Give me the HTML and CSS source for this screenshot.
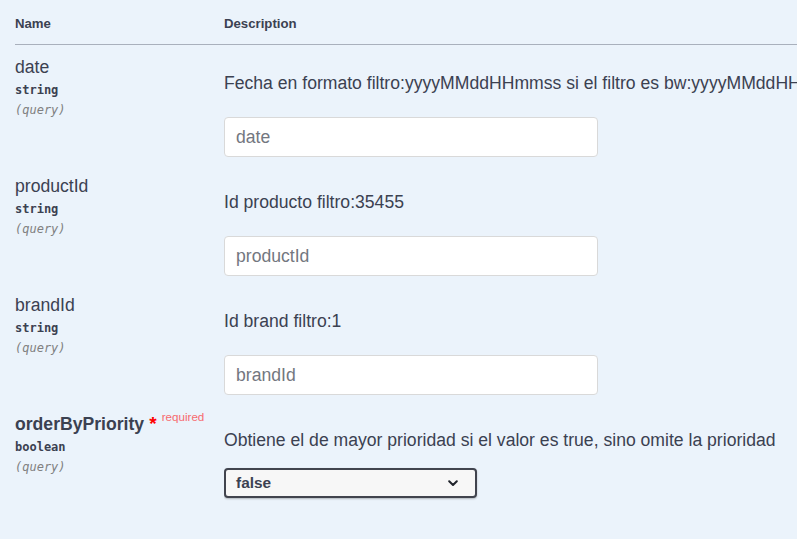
FILE: index.html
```html
<!DOCTYPE html>
<html lang="es">
<head>
<meta charset="utf-8">
<title>Parameters</title>
<link rel="stylesheet" href="styles.css">
</head>
<body>
<div class="params">
  <div class="thead">
    <div class="th">Name</div>
    <div class="th">Description</div>
  </div>

  <div class="row">
    <div class="col-name">
      <div class="p-name">date</div>
      <div class="p-type">string</div>
      <div class="p-in">(query)</div>
    </div>
    <div class="col-desc">
      <p class="desc">Fecha en formato filtro:yyyyMMddHHmmss si el filtro es bw:yyyyMMddHH</p>
      <input class="text-input" type="text" placeholder="date">
    </div>
  </div>

  <div class="row">
    <div class="col-name">
      <div class="p-name">productId</div>
      <div class="p-type">string</div>
      <div class="p-in">(query)</div>
    </div>
    <div class="col-desc">
      <p class="desc">Id producto filtro:35455</p>
      <input class="text-input" type="text" placeholder="productId">
    </div>
  </div>

  <div class="row">
    <div class="col-name">
      <div class="p-name">brandId</div>
      <div class="p-type">string</div>
      <div class="p-in">(query)</div>
    </div>
    <div class="col-desc">
      <p class="desc">Id brand filtro:1</p>
      <input class="text-input" type="text" placeholder="brandId">
    </div>
  </div>

  <div class="row">
    <div class="col-name">
      <div class="p-name required">orderByPriority<span class="star">&nbsp;*</span><span class="req">required</span></div>
      <div class="p-type">boolean</div>
      <div class="p-in">(query)</div>
    </div>
    <div class="col-desc">
      <p class="desc">Obtiene el de mayor prioridad si el valor es true, sino omite la prioridad</p>
      <div class="select">
        <span class="select-value">false</span>
        <svg class="chev" width="10" height="7" viewBox="0 0 10 7"><polyline points="1.2,1.2 5,5 8.8,1.2" fill="none" stroke="#1f232b" stroke-width="2" stroke-linecap="round" stroke-linejoin="round"/></svg>
      </div>
    </div>
  </div>
</div>
</body>
</html>
```

FILE: styles.css
```css
html, body {
  margin: 0;
  padding: 0;
}
body {
  background: #ebf3fb;
  color: #3b4151;
  font-family: "Liberation Sans", Arial, sans-serif;
  overflow: hidden;
  width: 797px;
  height: 539px;
}
.params {
  margin-left: 15px;
  width: 782px;
}
.thead {
  display: grid;
  grid-template-columns: 209px 1fr;
  border-bottom: 1px solid #a9b0bc;
  height: 44px;
}
.th {
  font-size: 13.2px;
  font-weight: 700;
  line-height: 16px;
  padding-top: 16px;
}
.row {
  display: grid;
  grid-template-columns: 209px 1fr;
  height: 119px;
  box-sizing: border-box;
  padding-top: 12px;
}
.col-desc {
  min-width: 0;
  overflow: hidden;
}
.p-name {
  font-size: 17.6px;
  line-height: 20px;
  white-space: nowrap;
}
.p-name.required {
  font-weight: 700;
}
.star {
  color: #ff0000;
  font-size: 19px;
  line-height: 20px;
}
.req {
  position: relative;
  top: -9px;
  font-weight: 400;
  font-size: 11.6px;
  line-height: 0;
  color: #f76a6e;
  padding-left: 5px;
}
.p-type {
  margin-top: 3px;
  font-family: "DejaVu Sans Mono", monospace;
  font-size: 12px;
  font-weight: 700;
  line-height: 20px;
}
.p-in {
  font-family: "DejaVu Sans Mono", monospace;
  font-size: 12px;
  font-style: italic;
  color: #808080;
  line-height: 20px;
}
.desc {
  margin: 16px 0 0;
  font-size: 17.6px;
  line-height: 20px;
  white-space: nowrap;
}
.text-input {
  display: block;
  margin-top: 24px;
  width: 374px;
  height: 40px;
  box-sizing: border-box;
  border: 1px solid #d9d9d9;
  border-radius: 4px;
  background: #fff;
  padding: 0 11px;
  font-family: "Liberation Sans", Arial, sans-serif;
  font-size: 17.6px;
  color: #3b4151;
  outline: none;
}
.text-input::placeholder {
  color: #737780;
}
.select {
  margin-top: 18px;
  width: 253px;
  height: 30px;
  box-sizing: border-box;
  border: 2px solid #41444e;
  border-radius: 4px;
  background: #f7f7f7;
  box-shadow: 0 1px 2px 0 rgba(0, 0, 0, 0.25);
  display: flex;
  align-items: center;
  justify-content: space-between;
  padding: 0 17px 0 10px;
}
.select-value {
  font-size: 15.4px;
  font-weight: 700;
  color: #3b4151;
}
.chev {
  display: block;
}
```
